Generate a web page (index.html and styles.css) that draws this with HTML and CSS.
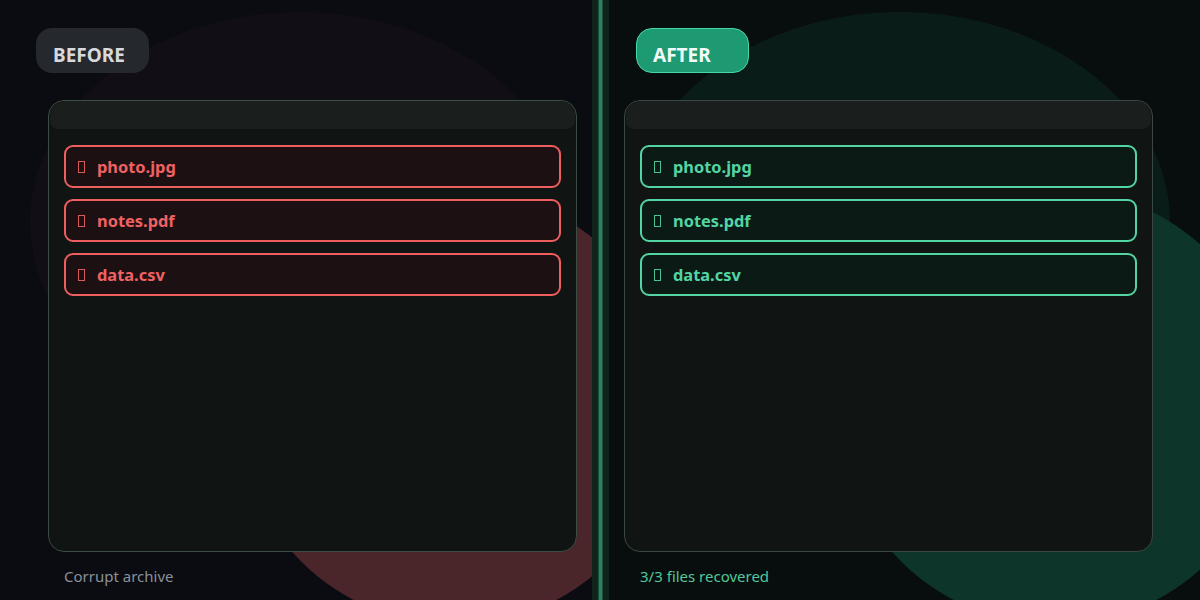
FILE: index.html
```html
<!DOCTYPE html>
<html lang="en">
<head>
<meta charset="utf-8">
<title>Before / After</title>
<link rel="stylesheet" href="styles.css">
</head>
<body>
<main class="split">
  <section class="pane pane-before">
    <div class="blob blob-big"></div>
    <div class="blob blob-accent"></div>
    <div class="badge">BEFORE</div>
    <div class="card">
      <div class="card-head"></div>
      <ul class="files">
        <li class="file"><span class="tofu"></span>photo.jpg</li>
        <li class="file"><span class="tofu"></span>notes.pdf</li>
        <li class="file"><span class="tofu"></span>data.csv</li>
      </ul>
    </div>
    <p class="caption">Corrupt archive</p>
  </section>
  <section class="pane pane-after">
    <div class="blob blob-big"></div>
    <div class="blob blob-accent"></div>
    <div class="badge">AFTER</div>
    <div class="card">
      <div class="card-head"></div>
      <ul class="files">
        <li class="file"><span class="tofu"></span>photo.jpg</li>
        <li class="file"><span class="tofu"></span>notes.pdf</li>
        <li class="file"><span class="tofu"></span>data.csv</li>
      </ul>
    </div>
    <p class="caption">3/3 files recovered</p>
  </section>
  <div class="divider"></div>
</main>
</body>
</html>
```

FILE: styles.css
```css
* { box-sizing: border-box; }

html, body {
  margin: 0;
  padding: 0;
  width: 1200px;
  height: 600px;
  overflow: hidden;
  background: #0a0c11;
  font-family: "Noto Sans", "Open Sans", sans-serif;
}

.split {
  position: relative;
  display: grid;
  grid-template-columns: 600px 600px;
  height: 600px;
}

.pane {
  position: relative;
  overflow: hidden;
  height: 600px;
  display: flex;
  flex-direction: column;
  padding-top: 28px;
}

.pane-before { background: #0a0c11; }
.pane-after { background: #080e0d; }

.blob {
  position: absolute;
  border-radius: 50%;
  z-index: 0;
}

.blob-big {
  left: 30px;
  top: 12px;
  width: 540px;
  height: 420px;
}

.blob-accent {
  left: 237px;
  top: 189px;
  width: 436px;
  height: 436px;
}

.pane-before .blob-big { background: #120e16; }
.pane-before .blob-accent { background: #4a2529; }
.pane-after .blob-big { background: #0a1c18; }
.pane-after .blob-accent { background: #0d3529; }

.badge {
  position: relative;
  z-index: 1;
  margin-left: 36px;
  width: 113px;
  height: 45px;
  border-radius: 16px;
  display: flex;
  align-items: center;
  padding: 9px 0 0 16px;
  font-size: 19px;
  font-weight: 700;
  border: 1px solid transparent;
}

.pane-before .badge {
  background: #25282d;
  color: #d8d9dc;
}

.pane-after .badge {
  background: #1e9a73;
  border-color: #47d7a2;
  color: #f2fbf7;
}

.card {
  position: relative;
  z-index: 1;
  margin-top: 27px;
  height: 452px;
  width: 529px;
  background: #101513;
  border: 1px solid #3a4c44;
  border-radius: 16px;
  display: flex;
  flex-direction: column;
}

.pane-before .card { margin-left: 48px; }
.pane-after .card { margin-left: 24px; border-color: #3b4744; }

.card-head {
  height: 28px;
  margin: 0 1px;
  background: #1a1f1d;
  border-radius: 15px 15px 8px 8px;
}

.files {
  list-style: none;
  margin: 16px 15px 0 15px;
  padding: 0;
  display: flex;
  flex-direction: column;
  gap: 11px;
}

.file {
  height: 43px;
  border: 2px solid;
  border-radius: 9px;
  display: flex;
  align-items: center;
  padding-left: 12px;
  font-size: 16.4px;
  font-weight: 700;
}

.pane-before .file {
  border-color: #ef5e5e;
  background: #1c1013;
  color: #f06262;
}

.pane-after .file {
  border-color: #52d5a3;
  background: #0c1a16;
  color: #52d5a3;
}

.tofu {
  display: inline-block;
  width: 7px;
  height: 12px;
  border: 1px solid currentColor;
  margin-right: 12px;
  opacity: 0.9;
}

.caption {
  position: relative;
  z-index: 1;
  margin: 14px 0 0 0;
  font-size: 15px;
  line-height: 20px;
}

.pane-before .caption { color: #8a9099; padding-left: 64px; }
.pane-after .caption { color: #52c89c; padding-left: 40px; }

.divider {
  position: absolute;
  left: 599px;
  top: 0;
  width: 3px;
  height: 600px;
  background: #2c8262;
  box-shadow: 0 0 0 1px #1c4f3d, 0 0 0 7px #11241c;
  z-index: 2;
}
```
